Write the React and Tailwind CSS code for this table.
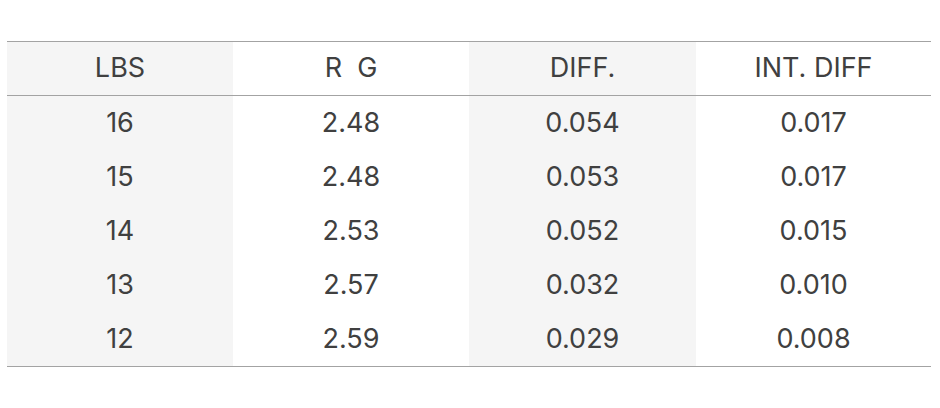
export default function App() {
  const header = ["LBS", "R\u00a0\u00a0G", "DIFF.", "INT. DIFF"];
  const rows = [
    ["16", "2.48", "0.054", "0.017"],
    ["15", "2.48", "0.053", "0.017"],
    ["14", "2.53", "0.052", "0.015"],
    ["13", "2.57", "0.032", "0.010"],
    ["12", "2.59", "0.029", "0.008"],
  ];
  const cols = "grid grid-cols-[226px_236px_227px_235px]";
  const shade = (i) => (i === 0 || i === 2 ? "bg-[#f5f5f5]" : "bg-white");
  return (
    <div className="w-[940px] h-[408px] bg-white pt-[41px] pl-[7px]" style={{ fontFamily: "Inter, 'Liberation Sans', sans-serif" }}>
      <div className="w-[924px] border-t border-b border-[#a3a3a3] text-[#404040] text-[27px]">
        <div className={`${cols} border-b border-[#a3a3a3]`}>
          {header.map((h, i) => (
            <div key={i} className={`h-[53px] flex items-center justify-center ${shade(i)}`}>{h}</div>
          ))}
        </div>
        {rows.map((r, ri) => (
          <div key={ri} className={cols}>
            {r.map((c, i) => (
              <div key={i} className={`h-[54px] flex items-center justify-center ${shade(i)}`}>{c}</div>
            ))}
          </div>
        ))}
      </div>
    </div>
  );
}
